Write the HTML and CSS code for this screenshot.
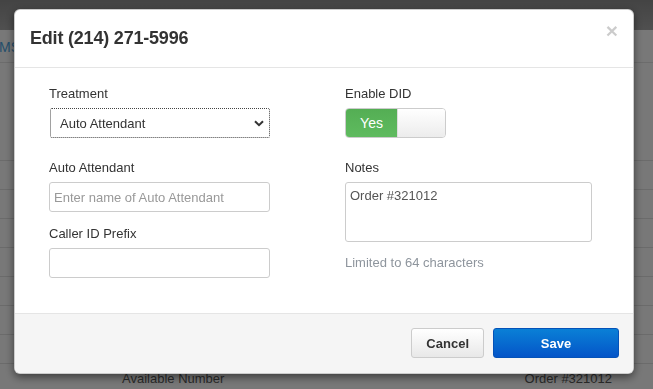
FILE: index.html
```html
<!DOCTYPE html>
<html lang="en">
<head>
    <meta charset="UTF-8">
    <title>Edit Number</title>
    <link rel="stylesheet" href="styles.css">
</head>
<body>
    <div class="page">
        <div class="topbar"></div>
        <div class="tabs"><span class="tab">MS</span></div>
        <div class="panel"></div>
        <div class="numbers">
            <div class="num-row"></div>
            <div class="num-row"></div>
            <div class="num-row"></div>
            <div class="num-row"></div>
            <div class="num-row"></div>
            <div class="num-row"></div>
            <div class="num-row"></div>
            <div class="num-row"><span class="num-type">Available Number</span><span class="num-note">Order #321012</span></div>
        </div>
    </div>

    <div class="backdrop">
        <div class="modal">
            <div class="modal-header">
                <h4 class="modal-title">Edit (214) 271-5996</h4>
                <button class="close" type="button">&times;</button>
            </div>
            <div class="modal-body">
                <div class="form-grid">
                    <div class="form-group">
                        <label for="treatment">Treatment</label>
                        <div class="select-wrap">
                            <select id="treatment" class="form-select">
                                <option>Auto Attendant</option>
                                <option>Forward</option>
                                <option>Voicemail</option>
                            </select>
                            <svg class="chevron" width="10" height="7" viewBox="0 0 10 7"><path d="M1 1.2 L5 5.2 L9 1.2" fill="none" stroke="#333" stroke-width="2"/></svg>
                        </div>
                    </div>
                    <div class="form-group">
                        <label>Enable DID</label>
                        <div class="switch">
                            <span class="switch-on">Yes</span>
                            <span class="switch-off"></span>
                        </div>
                    </div>
                    <div class="stack">
                        <div class="form-group">
                            <label for="aa-name">Auto Attendant</label>
                            <input id="aa-name" class="form-control" type="text" placeholder="Enter name of Auto Attendant">
                        </div>
                        <div class="form-group">
                            <label for="cid-prefix">Caller ID Prefix</label>
                            <input id="cid-prefix" class="form-control" type="text">
                        </div>
                    </div>
                    <div class="stack">
                        <div class="form-group">
                            <label for="notes">Notes</label>
                            <textarea id="notes" class="form-control notes">Order #321012</textarea>
                        </div>
                        <span class="help">Limited to 64 characters</span>
                    </div>
                </div>
            </div>
            <div class="modal-footer">
                <button class="btn btn-default" type="button">Cancel</button>
                <button class="btn btn-primary" type="button">Save</button>
            </div>
        </div>
    </div>
</body>
</html>
```

FILE: styles.css
```css
body { margin: 0; font-family: "Liberation Sans", Arial, Helvetica, sans-serif; font-size: 13px; color: #333; background-color: #f0f0f0; overflow: hidden; }

/* page behind the dialog */
.page { height: 389px; }
.topbar { height: 30px; background: linear-gradient(#888, #a0a0a0); }
.tabs { height: 32px; border-bottom: 1px solid #d8d8d8; display: flex; align-items: center; }
.tab { font-size: 14px; color: #4a9ed8; margin-left: -1px; padding-top: 2px; }
.panel { height: 97px; }
.num-row { height: 28px; border-top: 1px solid #d6d6d6; display: flex; justify-content: space-between; align-items: center; padding: 0 41px 0 122px; color: #555; }
.backdrop { position: fixed; inset: 0; background-color: rgba(0,0,0,0.5); }

/* dialog */
.modal { width: 618px; margin: 9px 0 0 14px; background-color: #fff; border: 1px solid rgba(0,0,0,0.2); border-radius: 6px; box-shadow: 0 3px 9px rgba(0,0,0,0.5); overflow: hidden; }
.modal-header { display: flex; justify-content: space-between; align-items: center; padding: 15px; border-bottom: 1px solid #e5e5e5; }
.modal-title { margin: 0; font-size: 18px; line-height: 27px; font-weight: bold; color: #333; letter-spacing: -0.2px; }
.close { border: none; background: none; padding: 0; margin-top: -16px; font-family: "Liberation Sans", Arial, sans-serif; font-size: 21px; font-weight: bold; line-height: 1; color: #000; opacity: 0.2; cursor: pointer; }

.modal-body { padding: 16px 0 35px 34px; }
.form-grid { display: grid; grid-template-columns: 221px 247px; column-gap: 75px; row-gap: 20px; }
.stack { display: flex; flex-direction: column; gap: 12px; }
.form-group { display: flex; flex-direction: column; }
.form-group label { line-height: 19px; margin-bottom: 5px; color: #333; }

.select-wrap { position: relative; width: 220px; margin-left: 1px; }
.form-select { width: 100%; height: 30px; appearance: none; -webkit-appearance: none; border: 1px dotted #444; border-radius: 2px; background-color: #fff; padding: 0 24px 0 9px; font-family: inherit; font-size: 13px; color: #333; outline: none; }
.chevron { position: absolute; right: 6px; top: 12px; pointer-events: none; }

.form-control { box-sizing: border-box; height: 30px; border: 1px solid #ccc; border-radius: 3px; padding: 4px; font-family: inherit; font-size: 13px; color: #555; background-color: #fff; outline: none; }
.form-control::placeholder { color: #999; }
.notes { height: 60px; resize: none; padding: 5px 4px; line-height: 16px; }
.help { color: #8e959d; line-height: 19px; margin-top: -1px; }

.switch { display: flex; width: 99px; height: 28px; border: 1px solid #ccc; border-radius: 4px; overflow: hidden; }
.switch-on { width: 51px; display: flex; align-items: center; justify-content: center; font-size: 14px; color: #fff; background: linear-gradient(#54ae54, #5fbb5f); }
.switch-off { flex: 1; background: linear-gradient(#fff, #ececec); border-left: 1px solid #ddd; }

.modal-footer { display: flex; justify-content: flex-end; gap: 9px; padding: 14px 14px 15px; background-color: #f5f5f5; border-top: 1px solid #e5e5e5; }
.btn { height: 30px; border-radius: 3px; font-family: inherit; font-size: 13px; font-weight: bold; cursor: pointer; }
.btn-default { padding: 0 14px; color: #333; border: 1px solid #ccc; background: linear-gradient(#fff, #e8e8e8); }
.btn-primary { width: 126px; color: #fff; border: 1px solid #0452b8; background: linear-gradient(#0a80d6, #0455c8); }
```
